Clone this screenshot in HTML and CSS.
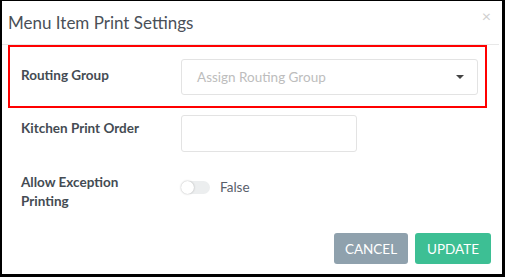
FILE: index.html
```html
<!DOCTYPE html>
<html>
<head>
  <title>Menu Item Print Settings</title>
  <meta name="viewport" content="width=device-width, initial-scale=1.0">
  <link rel="stylesheet" href="styles.css">
</head>
<body>
  <div class="modal">
    <div class="modal-header">
      <h4 class="modal-title">Menu Item Print Settings</h4>
      <span class="close">&times;</span>
    </div>
    <div class="modal-body">
      <div class="form-row highlight">
        <label class="form-label">Routing Group</label>
        <div class="select">
          <span class="placeholder">Assign Routing Group</span>
          <span class="caret"></span>
        </div>
      </div>
      <div class="form-row">
        <label class="form-label">Kitchen Print Order</label>
        <input type="text" class="text-input">
      </div>
      <div class="form-row toggle-row">
        <label class="form-label">Allow Exception Printing</label>
        <div class="toggle-wrap">
          <span class="toggle"><span class="knob"></span></span>
          <span class="toggle-text">False</span>
        </div>
      </div>
    </div>
    <div class="modal-footer">
      <button class="btn btn-cancel">CANCEL</button>
      <button class="btn btn-update">UPDATE</button>
    </div>
  </div>
</body>
</html>
```

FILE: styles.css
```css
body {
  margin: 0;
  font-family: Lato, "Open Sans", Arial, sans-serif;
  background-color: #fff;
}
.modal {
  width: 505px;
  height: 277px;
  box-sizing: border-box;
  border-style: solid;
  border-color: #000;
  border-width: 1px 3px 3px 2px;
  background-color: #fff;
  display: flex;
  flex-direction: column;
}
.modal-header {
  height: 43px;
  display: flex;
  justify-content: space-between;
  align-items: center;
  padding: 0 8px 0 6px;
  border-bottom: 1px solid #e8e8e8;
  margin-right: 3px;
}
.modal-title {
  margin: 0;
  font-size: 17px;
  font-weight: normal;
  color: #4a5058;
}
.close {
  color: #cfcfcf;
  font-size: 16px;
  margin-top: -14px;
}
.form-row {
  display: flex;
  align-items: center;
  padding-left: 19px;
}
.form-label {
  width: 160px;
  font-size: 13.5px;
  font-weight: bold;
  color: #444b53;
  line-height: 17px;
  margin-top: -3px;
}
.highlight {
  margin: 0 15px 0 6px;
  border: 2px solid #f00;
  padding: 12px 7px 11px 11px;
}
.select {
  flex: 1;
  height: 36px;
  box-sizing: border-box;
  border: 1px solid #e3e3e3;
  border-radius: 3px;
  display: flex;
  align-items: center;
  justify-content: space-between;
  padding: 0 13px 0 15px;
}
.placeholder {
  font-size: 13.5px;
  color: #bdbdbd;
}
.caret {
  width: 0;
  height: 0;
  border-left: 4px solid transparent;
  border-right: 4px solid transparent;
  border-top: 4px solid #444;
}
.text-input {
  margin-top: 7px;
  width: 176px;
  height: 37px;
  box-sizing: border-box;
  border: 1px solid #e3e3e3;
  border-radius: 3px;
  padding: 0 10px;
}
.toggle-row {
  align-items: flex-start;
  margin-top: 24px;
}
.toggle-row .form-label {
  width: 110px;
  margin-right: 50px;
  line-height: 19px;
}
.toggle-wrap {
  display: flex;
  align-items: center;
  margin-top: 3px;
}
.toggle {
  width: 29px;
  height: 13px;
  border-radius: 7px;
  background-color: #eceeef;
  position: relative;
  margin-right: 10px;
}
.knob {
  position: absolute;
  left: 0;
  top: 0;
  width: 13px;
  height: 13px;
  border-radius: 50%;
  background-color: #fff;
  box-shadow: 0 0 2px rgba(0, 0, 0, 0.3);
}
.toggle-text {
  font-size: 13.5px;
  color: #59606a;
}
.modal-footer {
  margin-top: auto;
  display: flex;
  justify-content: flex-end;
  gap: 7px;
  padding: 0 11px 10px 0;
}
.btn {
  height: 31px;
  border: none;
  border-radius: 3px;
  color: #fff;
  font-family: Lato, "Open Sans", Arial, sans-serif;
  font-size: 13.5px;
  padding: 0;
}
.btn-cancel {
  width: 74px;
  background-color: #8fa1ad;
}
.btn-update {
  width: 76px;
  background-color: #3dbf94;
}
```
